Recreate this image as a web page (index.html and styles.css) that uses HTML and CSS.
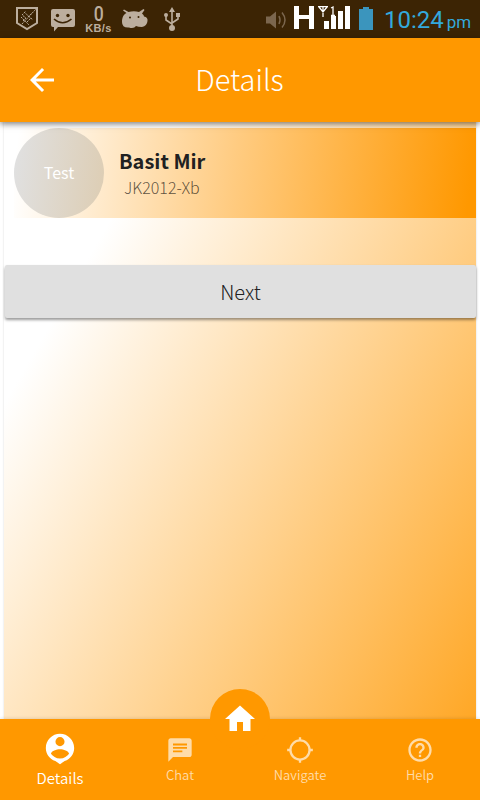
FILE: index.html
```html
<!DOCTYPE html>
<html lang="en">
<head>
<meta charset="utf-8">
<title>Details</title>
<link rel="stylesheet" href="styles.css">
</head>
<body>
<div class="status">
  <svg class="status-left" width="84" height="38" viewBox="0 0 84 38" fill="#bcae9e">
    <path d="M17 8H37V23L27 29L17 23Z" fill="none" stroke="#bcae9e" stroke-width="2"/>
    <path d="M22 24L36 9M21 17L29 25M24 12L33 20M23 21L26 18L22 15L26 11M28 17L32 13M27 22L31 18" fill="none" stroke="#bcae9e" stroke-width="1" stroke-dasharray="2 1"/>
    <path d="M52 9H73Q75 9 75 11V25Q75 27 73 27H58L54 31.500V27H53Q51 27 51 25V11Q51 9 53 9Z"/>
    <circle cx="57.500" cy="15.500" r="1.700" fill="#3c2404"/><circle cx="68" cy="15.500" r="1.700" fill="#3c2404"/>
    <path d="M54 19Q62.500 26.500 71.500 19" fill="none" stroke="#3c2404" stroke-width="1.600"/>
  </svg>
  <div class="speed"><span class="speed-num">0</span><span class="speed-unit">KB/s</span></div>
  <svg class="status-mid" width="70" height="38" viewBox="114 0 70 38" fill="#bcae9e">
    <path d="M122 22C122 17 124 14 126.500 13L123 10.500L124 9.500L128.500 12Q134 10.500 139 12L143.500 9L144.500 10L142 13.500Q144 15 144 16.500Q148 17 147.500 21Q147 26 142 27Q138 27 136 26Q134 29 129 27.500Q122 28 122 22Z"/>
    <circle cx="130" cy="17.500" r="1" fill="#3c2404"/><circle cx="138.500" cy="17" r="1" fill="#3c2404"/>
    <path d="M172 11V28M166 16V20L172 24M178 15V19L172 23" fill="none" stroke="#bcae9e" stroke-width="1.600"/>
    <path d="M169 12L172 7L175 12Z"/><circle cx="172" cy="28" r="3"/><circle cx="166" cy="15" r="2"/><path d="M176 13h4v4h-4z"/>
  </svg>
  <svg class="status-right" width="112" height="38" viewBox="264 0 112 38">
    <path d="M266 16.500H270L276 11.500V28.500L270 23.500H266Z" fill="#7b664e"/>
    <path d="M279 16Q281 20 279 24M282 12.500Q288 20 282 27.500" fill="none" stroke="#7b664e" stroke-width="1.500"/>
    <path d="M294 6H299V15H309V6H314V29H309V19H299V29H294Z" fill="#fff"/>
    <path d="M324 21h5v8h-5zM331 16h5v13h-5zM338 11h5v18h-5zM345 6h5v23h-5z" fill="#fff"/>
    <path d="M318 6.700H328M319 7L323 12L327 7M323 6V17M331 8L333 7V15M331 15.300H335" fill="none" stroke="#fff" stroke-width="1.300"/>
    <path d="M359 9H363V7H369V9H373V30H359Z" fill="#3b95bd"/>
  </svg>
  <div class="clock">10:24<span class="pm">pm</span></div>
</div>
<header class="bar">
  <svg class="back" width="36" height="36" viewBox="0 0 24 24"><path d="M20 11H7.830l5.590-5.590L12 4l-8 8 8 8 1.410-1.410L7.830 13H20v-2z" fill="#fff"/></svg>
  <h1 class="title">Details</h1>
</header>
<main class="page">
  <section class="person">
    <div class="avatar">Test</div>
    <div class="info"><div class="name">Basit Mir</div><div class="code">JK2012-Xb</div></div>
  </section>
  <button class="next">Next</button>
</main>
<nav class="tabs">
  <div class="tab active">
    <svg width="34" height="34" viewBox="0 0 24 24"><path fill="currentColor" d="M12 2C6.480 2 2 6.480 2 12c0 4.170 2.560 7.740 6.700 9.240L12 23.400l3.300-2.160C19.440 19.740 22 16.170 22 12c0-5.520-4.480-10-10-10zm0 2.300a3.200 3.200 0 1 1 0 6.400 3.200 3.200 0 0 1 0-6.400zM12 19.400c-3 0-5-1.600-6.400-3.400C6 13.900 9.500 12.800 12 12.800s6 1.100 6.400 3.200C17 17.800 15 19.400 12 19.400z"/></svg>
    <span>Details</span>
  </div>
  <div class="tab">
    <svg width="28" height="28" viewBox="0 0 24 24"><path fill="currentColor" d="M20 2H4c-1.100 0-1.990.9-1.990 2L2 22l4-4h14c1.100 0 2-.9 2-2V4c0-1.100-.9-2-2-2zM6 6.500h12v1.600H6V6.500zm8 7.500H6v-1.600h8V14zm4-3H6V9.400h12V11z"/></svg>
    <span>Chat</span>
  </div>
  <div class="tab">
    <svg width="28" height="28" viewBox="0 0 24 24" fill="none" stroke="currentColor" stroke-width="2"><circle cx="12" cy="12" r="8.200"/><path d="M12 1v3M12 20v3M1 12h3M20 12h3"/></svg>
    <span>Navigate</span>
  </div>
  <div class="tab">
    <svg width="28" height="28" viewBox="0 0 24 24"><path fill="currentColor" d="M11 18h2v-2h-2v2zm1-16C6.480 2 2 6.480 2 12s4.480 10 10 10 10-4.480 10-10S17.520 2 12 2zm0 18c-4.410 0-8-3.590-8-8s3.590-8 8-8 8 3.590 8 8-3.590 8-8 8zm0-14c-2.210 0-4 1.790-4 4h2c0-1.100.9-2 2-2s2 .9 2 2c0 2-3 1.750-3 5h2c0-2.250 3-2.500 3-5 0-2.210-1.790-4-4-4z"/></svg>
    <span>Help</span>
  </div>
  <div class="home"><svg width="36" height="36" viewBox="0 0 24 24"><path d="M10 20v-6h4v6h5v-8h3L12 3 2 12h3v8z" fill="#fff"/></svg></div>
</nav>
</body>
</html>
```
FILE: styles.css
```css
* { box-sizing: border-box; }
body {
  margin: 0;
  width: 480px;
  height: 800px;
  overflow: hidden;
  display: flex;
  flex-direction: column;
  background: #fff;
  font-family: "Noto Sans CJK SC", "Noto Sans", sans-serif;
  font-weight: 350;
}
svg { display: block; flex: none; }
.status {
  height: 38px;
  flex: none;
  display: flex;
  background: #3c2404;
}
.speed {
  width: 30px;
  display: flex;
  flex-direction: column;
  align-items: center;
  color: #bcae9e;
  font-family: Roboto, sans-serif;
}
.speed-num { font-size: 20px; line-height: 18px; margin-top: 5px; font-weight: 500; transform: scaleX(.88); }
.speed-unit { font: 700 11px/10px "Liberation Sans", sans-serif; margin-left: -1px; letter-spacing: .4px; }
.status-right { margin-left: 80px; }
.clock {
  margin-left: 8px;
  font: 400 24px/40px Roboto, sans-serif;
  color: #33a9dc;
  white-space: nowrap;
}
.pm { font-size: 17px; margin-left: 3px; }
.bar {
  height: 84px;
  flex: none;
  display: grid;
  grid-template-columns: 84px 1fr 84px;
  align-items: center;
  background: #ff9800;
  box-shadow: 0 2px 6px rgba(0, 0, 0, .5);
  position: relative;
  z-index: 1;
}
.back { justify-self: center; }
.title {
  margin: 0;
  padding: 0 1px 5px 0;
  text-align: center;
  color: #fff;
  font-size: 29px;
  font-weight: 300;
  line-height: 40px;
}
.page {
  flex: 1;
  margin: 0 4px;
  padding-top: 6px;
  background: linear-gradient(120deg, #fff 141px, #ff9800 806px);
  box-shadow: 0 0 2px rgba(0, 0, 0, .15);
}
.person {
  height: 90px;
  margin-left: 10px;
  display: flex;
  background: linear-gradient(97deg, #fff 1%, #ffcb80 48%, #ff9800 98%);
}
.avatar {
  width: 90px;
  height: 90px;
  border-radius: 50%;
  background: linear-gradient(97deg, #e0e0e0 5%, #ddcdb3);
  color: #fff;
  font-size: 16px;
  font-weight: 400;
  line-height: 88px;
  text-align: center;
}
.info { margin-left: 15px; padding-top: 19px; }
.name { font-size: 20px; line-height: 28px; font-weight: 700; color: #212121; }
.code { margin-left: 5px; font-size: 16px; line-height: 24px; font-weight: 300; color: rgba(0, 0, 0, .65); }
.next {
  display: block;
  width: 471px;
  height: 53px;
  margin: 47px 0 0 1px;
  padding: 0;
  border: 0;
  border-radius: 2px;
  background: #e0e0e0;
  box-shadow: 0 2px 3px rgba(0, 0, 0, .4);
  color: #212121;
  font: inherit;
  font-size: 20px;
  font-weight: 300;
}
.tabs {
  height: 81px;
  flex: none;
  display: grid;
  grid-template-columns: repeat(4, 1fr);
  background: #ff9800;
  position: relative;
  box-shadow: 0 -1px 3px rgba(0, 0, 0, .1);
}
.tab {
  display: flex;
  flex-direction: column;
  align-items: center;
  padding-top: 17px;
  color: #ffdca9;
  font-size: 13px;
  line-height: 18px;
}
.tab span { margin-top: 2px; }
.active { padding-top: 12px; color: #fff; font-size: 15px; line-height: 22px; }
.active span { margin-top: 2px; }
.home {
  position: absolute;
  left: 210px;
  top: -30px;
  width: 60px;
  height: 60px;
  border-radius: 50%;
  background: #ff9800;
  display: grid;
  place-items: center;
}
```
